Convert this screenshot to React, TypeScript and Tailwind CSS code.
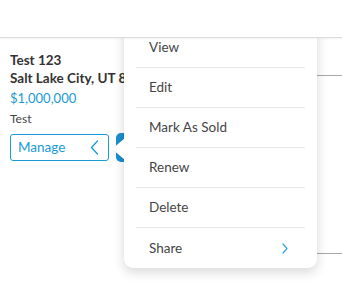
const menuItems = ["View", "Edit", "Mark As Sold", "Renew", "Delete", "Share"];

const ActionMenu = () => {
  return (
    <div className="absolute left-[124px] top-[28px] z-10 w-[193px]">
      {/* little pointer on the left edge */}
      <svg
        className="absolute left-[-12px] top-[110px] drop-shadow-[-1px_0_1px_rgba(0,0,0,0.08)]"
        width="13"
        height="22"
        viewBox="0 0 13 22"
      >
        <path d="M13 0 L0 11 L13 22 Z" fill="#ffffff" />
      </svg>
      <ul className="bg-white rounded-b-[9px] shadow-[0_4px_12px_rgba(0,0,0,0.16)]">
        {menuItems.map((item, i) => (
          <li key={item} className="px-3">
            <div
              className={`flex items-center justify-between h-[40px] pl-[13px] pr-[17px] text-[13.5px] text-[#454545] ${
                i < menuItems.length - 1 ? "border-b border-[#e6e6e6]" : ""
              }`}
            >
              <span>{item}</span>
              {item === "Share" && (
                <svg width="6" height="11" viewBox="0 0 6 11">
                  <path d="M1 1 L5 5.5 L1 10" fill="none" stroke="#2aa6df" strokeWidth="1.2" strokeLinecap="round" strokeLinejoin="round" />
                </svg>
              )}
            </div>
          </li>
        ))}
      </ul>
    </div>
  );
};

const App = () => {
  return (
    <div className="relative w-[342px] h-[285px] overflow-hidden bg-white" style={{ fontFamily: "Lato, 'Noto Sans', sans-serif" }}>
      <header className="relative z-20 h-[38px] bg-white border-b border-[#dcdcdc] shadow-[0_1px_2px_rgba(0,0,0,0.05)]" />

      <div className="flex">
        <div className="w-[200px] pl-[10px] pt-[13px]">
          <h3 className="text-[13.5px] font-bold leading-[18px] text-[#333]">Test 123</h3>
          <p className="w-[114px] overflow-hidden text-[13.5px] font-bold leading-[18px] text-[#333] whitespace-nowrap">Salt Lake City, UT 84101</p>
          <p className="mt-[2px] text-[13px] leading-[18px] text-[#1a9ad6]">$1,000,000</p>
          <p className="mt-[3px] text-[12px] leading-[18px] text-[#444]">Test</p>
          <div className="mt-[5px] flex items-center gap-[7px]">
            <button className="flex items-center justify-between w-[99px] h-[27px] pl-[7px] pr-[9px] border border-[#1a9ad6] rounded-[3px] text-[13.5px] text-[#1a9ad6]">
              <span>Manage</span>
              <svg width="9" height="15" viewBox="0 0 9 15">
                <path d="M7.5 1 L1.5 7.5 L7.5 14" fill="none" stroke="#1a9ad6" strokeWidth="1.3" strokeLinecap="round" strokeLinejoin="round" />
              </svg>
            </button>
            <div className="w-[26px] h-[29px] rounded-[5px] bg-[#1a8fd0]" />
          </div>
        </div>

        <div className="flex-1">
          <div className="h-[38px] border-b border-[#a8a8a8]" />
          <div className="h-[178px] border-b border-[#a8a8a8]" />
        </div>
      </div>

      <ActionMenu />
    </div>
  );
};

export default App;
